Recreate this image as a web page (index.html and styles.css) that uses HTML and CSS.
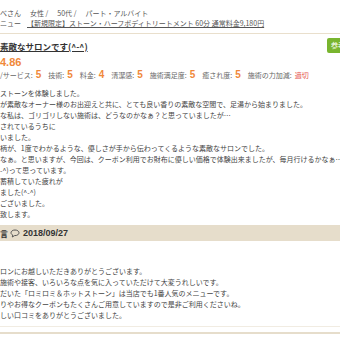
FILE: index.html
```html
<!DOCTYPE html>
<html lang="ja">
<head>
    <meta charset="UTF-8">
    <title>口コミ</title>
    <link rel="stylesheet" href="styles.css">
</head>
<body>
<div class="page">
    <div class="reviewer">
        <span>べさん</span>
        <span>女性 /</span>
        <span>50代 /</span>
        <span>パート・アルバイト</span>
    </div>
    <div class="menu">
        <span>ニュー</span>
        <a href="#">【新規限定】ストーン・ハーフボディトリートメント 60分 通常料金9,180円</a>
    </div>

    <div class="review-head">
        <a href="#" class="review-title">素敵なサロンです(^-^)</a>
        <a href="#" class="btn-good">参考になった</a>
    </div>
    <div class="score">4.86</div>
    <div class="ratings">
        <span class="label">/サービス:</span><span class="num">5</span>
        <span class="label">技術:</span><span class="num">5</span>
        <span class="label">料金:</span><span class="num">4</span>
        <span class="label">清潔感:</span><span class="num">5</span>
        <span class="label">施術満足度:</span><span class="num">5</span>
        <span class="label">癒され度:</span><span class="num">5</span>
        <span class="label">施術の力加減:</span><span class="pressure">適切</span>
    </div>

    <div class="review-body">
        ストーンを体験しました。<br>
        が素敵なオーナー様のお出迎えと共に、とても良い香りの素敵な空間で、足湯から始まりました。<br>
        な私は、ゴリゴリしない施術は、どうなのかなぁ？と思っていましたが…<br>
        されているうちに<br>
        いました。<br>
        柄が、1度でわかるような、優しさが手から伝わってくるような素敵なサロンでした。<br>
        なぁ。と思いますが、今回は、クーポン利用でお財布に優しい価格で体験出来ましたが、毎月行けるかなぁ…<br>
        -^)って思っています。<br>
        蓄積していた疲れが<br>
        ました(^-^)<br>
        ございました。<br>
        致します。
    </div>

    <div class="reply-bar">
        <span>言</span>
        <svg class="bubble" width="10" height="9" viewBox="0 0 10 9">
            <path d="M5 1C2.6 1 1 2.3 1 3.8c0 1 .7 1.8 1.7 2.3L2.3 8l2.2-1.4H5c2.4 0 4-1.3 4-2.8S7.4 1 5 1z" fill="none" stroke="#555" stroke-width="1"/>
        </svg>
        <span class="reply-date">2018/09/27</span>
    </div>

    <div class="reply-body">
        ロンにお越しいただきありがとうございます。<br>
        施術や接客、いろいろな点を気に入っていただけて大変うれしいです。<br>
        だいた「ロミロミ＆ホットストーン」は当店でも1番人気のメニューです。<br>
        りやお得なクーポンもたくさんご用意していますので是非ご利用くださいね。<br>
        しい口コミをありがとうございました。
    </div>
    <div class="reply-end"></div>
    <div class="review-end"></div>
</div>
</body>
</html>
```

FILE: styles.css
```css
body {
    margin: 0;
    padding: 0;
    background: #fff;
    overflow: hidden;
    font-family: "Noto Sans CJK JP", "DejaVu Sans", sans-serif;
    color: #444;
}
.page {
    width: 380px;
}
.reviewer {
    padding-top: 8px;
    font-size: 7px;
    line-height: 10px;
    color: #555;
    display: flex;
    gap: 9px;
}
.menu {
    font-size: 7px;
    line-height: 10px;
    color: #555;
    display: flex;
    gap: 6px;
    padding-bottom: 5px;
    border-bottom: 1px solid #e9dfcc;
}
.menu a {
    color: #555;
    text-decoration: underline;
}
.review-head {
    margin-top: 4px;
    display: flex;
    justify-content: space-between;
    align-items: center;
    height: 15px;
}
.review-title {
    font-size: 8.5px;
    font-weight: bold;
    color: #333;
    text-decoration: underline;
}
.btn-good {
    width: 53px;
    height: 15px;
    box-sizing: border-box;
    padding-left: 4px;
    background-color: #79b52f;
    border-radius: 2px;
    color: #e8f3d8;
    font-size: 7px;
    font-weight: bold;
    line-height: 15px;
    text-decoration: none;
}
.score {
    margin-top: 2px;
    font-family: "Liberation Sans", Arial, sans-serif;
    font-size: 11px;
    font-weight: bold;
    line-height: 14px;
    color: #f0883a;
}
.ratings {
    line-height: 12px;
    display: flex;
    align-items: baseline;
}
.ratings .label {
    font-size: 7px;
    color: #666;
}
.ratings .num {
    font-family: "Liberation Sans", Arial, sans-serif;
    font-size: 10px;
    font-weight: bold;
    color: #f0883a;
    margin: 0 7px 0 3px;
}
.ratings .pressure {
    font-size: 7px;
    color: #e5524b;
    margin-left: 3px;
}
.review-body {
    margin-top: 7px;
    font-size: 7px;
    line-height: 11px;
    color: #444;
    white-space: nowrap;
}
.reply-bar {
    margin-top: 5px;
    height: 16px;
    background-color: #e6ddcb;
    display: flex;
    align-items: center;
    gap: 2px;
    font-size: 8px;
    font-weight: bold;
    color: #333;
}
.reply-date {
    font-family: "Liberation Sans", Arial, sans-serif;
    font-size: 9px;
    margin-left: 1px;
}
.reply-body {
    margin-top: 25px;
    font-size: 7px;
    line-height: 11px;
    color: #444;
    white-space: nowrap;
}
.reply-end {
    margin-top: 5px;
    border-top: 1px solid #f1ece2;
}
.review-end {
    margin-top: 5px;
    border-top: 2px solid #e6ddcb;
}
```
